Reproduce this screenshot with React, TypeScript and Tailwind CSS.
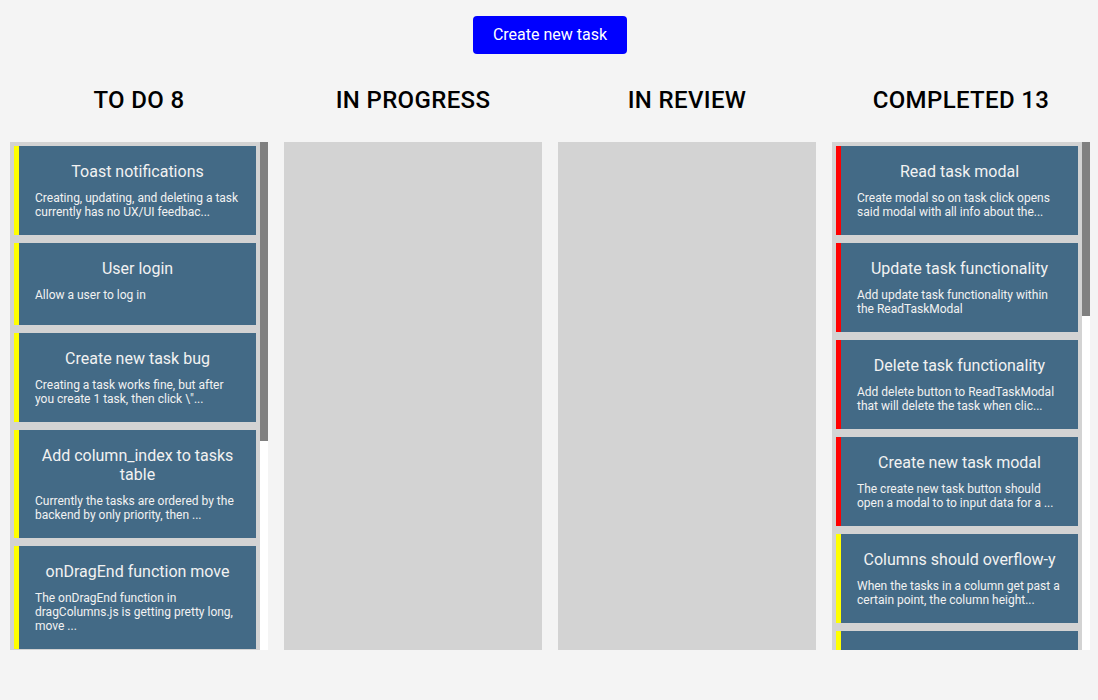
import React from "react";

type Task = { title: string; desc: string; color: "yellow" | "red" };

const todo: Task[] = [
  { title: "Toast notifications", desc: "Creating, updating, and deleting a task currently has no UX/UI feedbac...", color: "yellow" },
  { title: "User login", desc: "Allow a user to log in", color: "yellow" },
  { title: "Create new task bug", desc: "Creating a task works fine, but after you create 1 task, then click \\\"...", color: "yellow" },
  { title: "Add column_index to tasks table", desc: "Currently the tasks are ordered by the backend by only priority, then ...", color: "yellow" },
  { title: "onDragEnd function move", desc: "The onDragEnd function in dragColumns.js is getting pretty long, move ...", color: "yellow" },
  { title: "Sort tasks within columns by priority", desc: "Tasks inside a column should be sorted by their priority level so the...", color: "yellow" },
  { title: "Persist column order after a page refresh", desc: "When the page is refreshed the tasks go back to their original order...", color: "yellow" },
  { title: "Add priority dropdown to new task modal", desc: "The user should be able to pick a priority when creating a new task...", color: "yellow" },
];

const completed: Task[] = [
  { title: "Read task modal", desc: "Create modal so on task click opens said modal with all info about the...", color: "red" },
  { title: "Update task functionality", desc: "Add update task functionality within the ReadTaskModal", color: "red" },
  { title: "Delete task functionality", desc: "Add delete button to ReadTaskModal that will delete the task when clic...", color: "red" },
  { title: "Create new task modal", desc: "The create new task button should open a modal to to input data for a ...", color: "red" },
  { title: "Columns should overflow-y", desc: "When the tasks in a column get past a certain point, the column height...", color: "yellow" },
  { title: "Drag and drop tasks between the columns", desc: "Use react-beautiful-dnd so tasks can be dragged from one column to another and the new column is saved...", color: "yellow" },
  { title: "Set up Express server with PostgreSQL", desc: "Create the backend with express and connect it to the postgres database so that the tasks can be...", color: "red" },
  { title: "Create tasks table and seed the data", desc: "Make a tasks table with title, description, priority and column, then add a seed file with some...", color: "red" },
  { title: "Fetch tasks on load", desc: "When the app loads, fetch all of the tasks from the backend and put each one in its correct column...", color: "red" },
  { title: "Show number of tasks in column header", desc: "Each column header should show how many tasks are currently in that column, next to the column...", color: "yellow" },
  { title: "Color code tasks by their priority level", desc: "Add a colored border on the left side of each task to show its priority, red for high and yellow for...", color: "red" },
  { title: "Basic column layout", desc: "Create the four columns: to do, in progress, in review and completed and style them so they sit...", color: "red" },
  { title: "Truncate long task descriptions", desc: "Descriptions that are too long should be cut off after a certain number of characters and end with...", color: "yellow" },
];

const columns: { name: string; tasks: Task[]; thumb: number }[] = [
  { name: "TO DO 8", tasks: todo, thumb: 299 },
  { name: "IN PROGRESS", tasks: [], thumb: 0 },
  { name: "IN REVIEW", tasks: [], thumb: 0 },
  { name: "COMPLETED 13", tasks: completed, thumb: 174 },
];

function Card({ task }: { task: Task }) {
  return (
    <div
      className={
        "shrink-0 min-h-[82px] bg-[#436a86] border-l-[5px] px-4 pt-4 pb-4 " +
        (task.color === "red" ? "border-[#ff0000]" : "border-[#ffff00]")
      }
    >
      <div className="text-center text-[16px] leading-[19px] text-[#f2f2f2] mb-[10px]">{task.title}</div>
      <div className="text-[12px] leading-[14px] text-[#f2f2f2]">{task.desc}</div>
    </div>
  );
}

export default function App() {
  return (
    <div className="min-h-[700px] bg-[#f4f4f4] font-['Roboto',sans-serif]">
      <div className="flex justify-center pt-4 pl-[2px]">
        <button className="h-[38px] w-[154px] justify-center bg-[#0000ff] text-white text-[16px] rounded-[4px] flex items-center">
          Create new task
        </button>
      </div>
      <div className="flex gap-4 pl-[10px] pr-[8px]">
        {columns.map((col) => (
          <div key={col.name} className="w-[258px] flex flex-col">
            <h2 className="h-[88px] pt-[3px] flex items-center justify-center text-[24px] font-medium tracking-[0.35px] text-black">
              {col.name}
            </h2>
            <div className="h-[508px] bg-[#d3d3d3] flex">
              <div className="flex-1 overflow-hidden p-1 flex flex-col gap-2">
                {col.tasks.map((t) => (
                  <Card key={t.title} task={t} />
                ))}
              </div>
              {col.thumb > 0 && (
                <div className="w-2 bg-white flex flex-col">
                  <div className="bg-[#808080]" style={{ height: col.thumb }} />
                </div>
              )}
            </div>
          </div>
        ))}
      </div>
    </div>
  );
}
